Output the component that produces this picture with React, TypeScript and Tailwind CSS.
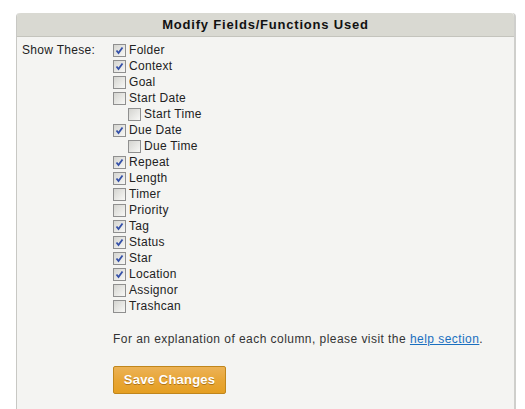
import React, { useState } from 'react'

const fields = [
  { name: 'Folder', checked: true },
  { name: 'Context', checked: true },
  { name: 'Goal', checked: false },
  { name: 'Start Date', checked: false },
  { name: 'Start Time', checked: false, sub: true },
  { name: 'Due Date', checked: true },
  { name: 'Due Time', checked: false, sub: true },
  { name: 'Repeat', checked: true },
  { name: 'Length', checked: true },
  { name: 'Timer', checked: false },
  { name: 'Priority', checked: false },
  { name: 'Tag', checked: true },
  { name: 'Status', checked: true },
  { name: 'Star', checked: true },
  { name: 'Location', checked: true },
  { name: 'Assignor', checked: false },
  { name: 'Trashcan', checked: false },
]

function Box({ checked, onClick }: { checked: boolean; onClick: () => void }) {
  return (
    <span
      onClick={onClick}
      className="relative inline-block w-[13px] h-[13px] border border-[#8f8f8f] bg-gradient-to-br from-[#d4d4d0] to-[#f8f8f6] shrink-0"
    >
      {checked && (
        <svg viewBox="0 0 11 11" className="absolute left-0 top-0 w-[11px] h-[11px]">
          <path d="M2.5 5.5 L4.5 8 L8.5 2.5" fill="none" stroke="#3450a8" strokeWidth="1.8" />
        </svg>
      )}
    </span>
  )
}

export default function App() {
  const [checks, setChecks] = useState(fields.map(f => f.checked))

  const toggle = (i: number) => {
    setChecks(prev => prev.map((c, j) => (j === i ? !c : c)))
  }

  return (
    <div className="w-[525px] h-[409px] bg-white pt-[13px] pl-[16px] font-['Liberation_Sans',Arial,sans-serif] text-[12px] text-[#222] tracking-[0.3px]">
      <div className="w-[500px] h-[396px] bg-[#f4f4f2] border-r-2 border-r-[#cfcfcc] border-l border-l-[#c8c8c4] rounded-tl-[4px] rounded-tr-[4px] flex flex-col">
        {/* Header */}
        <div className="h-[24px] bg-[#d9d9d2] border-b border-[#c4c4bd] rounded-t-[4px] flex items-center justify-center font-bold text-[13px] tracking-[0.8px] text-[#111]">
          Modify Fields/Functions Used
        </div>

        <div className="flex pl-[5px] pt-[5px]">
          <div className="w-[91px] leading-[16px]">Show These:</div>
          <div className="flex flex-col">
            {fields.map((f, i) => (
              <label
                key={f.name}
                className={`flex items-center h-[16px] gap-[3px] ${f.sub ? 'pl-[15px]' : ''}`}
              >
                <Box checked={checks[i]} onClick={() => toggle(i)} />
                <span>{f.name}</span>
              </label>
            ))}

            <p className="mt-[17px] leading-[16px] text-[#333] tracking-[0.45px]">
              For an explanation of each column, please visit the{' '}
              <a href="#" className="text-[#1a6fc0] underline">help section</a>.
            </p>

            <div className="mt-[19px]">
              <button className="w-[113px] h-[28px] rounded-[2px] border border-[#c0861c] bg-gradient-to-b from-[#ecb255] via-[#e8a636] to-[#e59f22] text-white font-bold text-[13px] tracking-[0.2px] [text-shadow:0_1px_0_rgba(120,70,0,0.5)]">
                Save Changes
              </button>
            </div>
          </div>
        </div>
      </div>
    </div>
  )
}
